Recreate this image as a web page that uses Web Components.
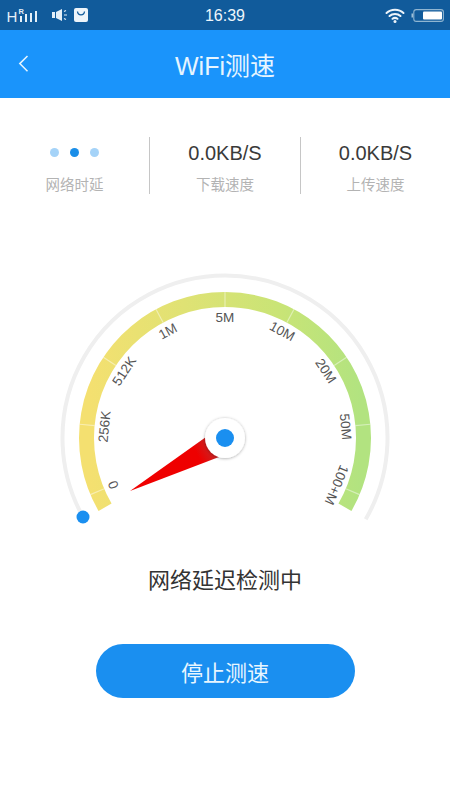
<!DOCTYPE html>
<html lang="zh">
<head>
<meta charset="utf-8">
<title>WiFi测速</title>
<style>
  html, body { margin: 0; padding: 0; background: #fff; }
  body { width: 450px; height: 800px; overflow: hidden; font-family: "Liberation Sans", "Noto Sans CJK SC", sans-serif; }
</style>
</head>
<body>
<speed-app>
  <status-bar time="16:39"></status-bar>
  <nav-bar>WiFi测速</nav-bar>
  <stat-row>
    <stat-cell label="网络时延"><loading-dots></loading-dots></stat-cell>
    <stat-cell label="下载速度">0.0KB/S</stat-cell>
    <stat-cell label="上传速度">0.0KB/S</stat-cell>
  </stat-row>
  <speed-gauge></speed-gauge>
  <status-text>网络延迟检测中</status-text>
  <pill-button>停止测速</pill-button>
</speed-app>

<script>
// small helper, every element is the same shape: styles + markup in a shadow root
function shadow(el, html) {
  el.attachShadow({ mode: 'open' }).innerHTML = html;
}

class SpeedApp extends HTMLElement {
  constructor() {
    super();
    shadow(this, `<style>:host { display: flex; flex-direction: column; width: 450px; height: 800px; background: #fff; }</style><slot></slot>`);
  }
}

class StatusBar extends HTMLElement {
  connectedCallback() {
    shadow(this, `
      <style>
        :host { display: grid; grid-template-columns: 1fr auto 1fr; align-items: center; height: 30px; background: #115b9b; color: #eef6fb; }
        .left { display: flex; align-items: center; gap: 14px; padding-left: 6px; }
        .right { display: flex; align-items: center; justify-content: flex-end; gap: 6px; padding-right: 6px; }
        .time { font-size: 16px; line-height: 30px; position: relative; top: 1px; }
        svg { display: block; }
      </style>
      <div class="left">
        <svg width="32" height="18" viewBox="0 0 32 18">
          <text x="0.5" y="16" font-size="15" fill="#e4eff8" font-family="Liberation Sans">H</text>
          <text x="12.5" y="8" font-size="7.5" font-weight="bold" fill="#e4eff8" font-family="Liberation Sans">R</text>
          <g fill="#e4eff8"><rect x="14" y="10" width="2" height="6"/><rect x="19" y="8" width="2" height="8"/><rect x="24" y="7" width="2" height="9"/><rect x="29" y="5" width="2" height="11"/></g>
        </svg>
        <svg width="16" height="12" viewBox="0 0 16 12">
          <rect x="0" y="3" width="3" height="6" fill="#e4eff8"/>
          <path d="M4 3 L10 0 V12 L4 9Z" fill="#e4eff8"/>
          <path d="M12 2.5l2-1M12 6h3M12 9.5l2 1" stroke="#e4eff8" stroke-width="1.2" fill="none"/>
        </svg>
        <svg width="14" height="14" viewBox="0 0 14 14" style="margin-left:-8px">
          <rect width="14" height="14" rx="2" fill="#edf4fa"/>
          <path d="M3.5 3.5 C4 8 10 8 10.5 3.5" stroke="#115b9b" stroke-width="1.3" fill="none"/>
        </svg>
      </div>
      <div class="time">${this.getAttribute('time')}</div>
      <div class="right">
        <svg width="20" height="15" viewBox="0 0 20 15">
          <g fill="none" stroke="#edf4fa" stroke-width="2" stroke-linecap="round">
            <path d="M1.5 5 C6 0.7 14 0.7 18.5 5"/>
            <path d="M4.5 8 C7.5 5.2 12.5 5.2 15.5 8"/>
            <path d="M7.5 10.8 C9 9.7 11 9.7 12.5 10.8"/>
          </g>
          <circle cx="10" cy="13.4" r="1.5" fill="#edf4fa"/>
        </svg>
        <svg width="33" height="13" viewBox="0 0 33 13">
          <path d="M0.5 4.5 H2 V8.5 H0.5Z" fill="#9dbfd8"/>
          <rect x="2.8" y="0.6" width="29.6" height="11.8" rx="2.5" fill="none" stroke="#8fb5d1" stroke-width="1.1"/>
          <rect x="12" y="2.4" width="19" height="8.2" rx="1" fill="#fff"/>
        </svg>
      </div>`);
  }
}

class NavBar extends HTMLElement {
  constructor() {
    super();
    shadow(this, `
      <style>
        :host { display: flex; align-items: center; justify-content: center; position: relative; height: 68px; background: #1a94fb; color: #e6f5ff; }
        .back { position: absolute; left: 18px; top: 24px; }
        .title { font-size: 25px; font-weight: 400; line-height: 68px; margin-top: 3px; }
      </style>
      <svg class="back" width="12" height="20" viewBox="0 0 12 20"><path d="M9.5 2 L1.8 9.6 L9.5 17.2" fill="none" stroke="#e6f5ff" stroke-width="1.5"/></svg>
      <div class="title"><slot></slot></div>`);
  }
}

class StatRow extends HTMLElement {
  constructor() {
    super();
    shadow(this, `<style>:host { display: grid; grid-template-columns: 150px 151px 149px; margin-top: 39px; height: 57px; }</style><slot></slot>`);
  }
}

class StatCell extends HTMLElement {
  connectedCallback() {
    shadow(this, `
      <style>
        :host { display: flex; flex-direction: column; align-items: center; justify-content: space-between; height: 57px; border-right: 1px solid #c6c6c6; box-sizing: border-box; }
        :host(:last-child) { border-right: 0; }
        .value { height: 32px; display: flex; align-items: center; font-size: 20px; color: #3a3a3a; }
        .label { font-size: 14.5px; line-height: 18px; color: #b3b3b3; }
      </style>
      <div class="value"><slot></slot></div>
      <div class="label">${this.getAttribute('label')}</div>`);
  }
}

class LoadingDots extends HTMLElement {
  constructor() {
    super();
    shadow(this, `
      <style>
        :host { display: flex; gap: 11px; margin-top: -1px; }
        i { width: 9px; height: 9px; border-radius: 50%; background: #a5d3f8; }
        i.on { background: #1a8ee8; }
      </style>
      <i></i><i class="on"></i><i></i>`);
  }
}

class SpeedGauge extends HTMLElement {
  connectedCallback() {
    const cx = 225, cy = 163;
    const pt = (r, deg) => {
      // deg measured clockwise from straight up
      const a = deg * Math.PI / 180;
      return [(cx + r * Math.sin(a)).toFixed(2), (cy - r * Math.cos(a)).toFixed(2)];
    };
    const arc = (r, from, to) => {
      const [x1, y1] = pt(r, from), [x2, y2] = pt(r, to);
      return `M${x1} ${y1} A${r} ${r} 0 1 1 ${x2} ${y2}`;
    };
    const labels = ['0', '256K', '512K', '1M', '5M', '10M', '20M', '50M', '100+M'];
    const step = 28.2;
    let ticks = '', texts = '';
    labels.forEach((t, i) => {
      const deg = (i - 4) * step;
      const [x1, y1] = pt(131, deg), [x2, y2] = pt(146, deg);
      ticks += `<line x1="${x1}" y1="${y1}" x2="${x2}" y2="${y2}" stroke="#fff" stroke-opacity=".45" stroke-width="1.2"/>`;
      const [tx, ty] = pt(121, deg);
      texts += `<text x="${tx}" y="${ty}" transform="rotate(${deg} ${tx} ${ty})" text-anchor="middle" dominant-baseline="central">${t}</text>`;
    });
    shadow(this, `
      <style>
        :host { display: block; height: 290px; margin-top: 81px; }
        svg { display: block; overflow: visible; }
        text { font-family: "Liberation Sans", sans-serif; font-size: 13.5px; fill: #555; }
      </style>
      <svg width="450" height="290" viewBox="0 0 450 290">
        <defs>
          <linearGradient id="band" gradientUnits="userSpaceOnUse" x1="90" y1="0" x2="360" y2="0">
            <stop offset="0" stop-color="#f4e070"/>
            <stop offset=".35" stop-color="#dfe274"/>
            <stop offset=".7" stop-color="#c9e476"/>
            <stop offset="1" stop-color="#b2e380"/>
          </linearGradient>
          <linearGradient id="needle" gradientUnits="userSpaceOnUse" x1="130" y1="216" x2="215" y2="172">
            <stop offset="0" stop-color="#f00000"/>
            <stop offset=".8" stop-color="#ee0000"/>
            <stop offset="1" stop-color="#c22a2a"/>
          </linearGradient>
          <filter id="hubShadow" x="-30%" y="-30%" width="160%" height="160%">
            <feDropShadow dx="0" dy="0.5" stdDeviation="1.6" flood-color="#000" flood-opacity=".35"/>
          </filter>
        </defs>
        <path d="${arc(162.5, -120, 120)}" fill="none" stroke="#efefef" stroke-width="4"/>
        <path d="${arc(138.5, -120, 120)}" fill="none" stroke="url(#band)" stroke-width="15"/>
        ${ticks}
        ${texts}
        <circle cx="83" cy="242" r="6.5" fill="#1a8ff0"/>
        <path d="M130 216 L206 162 L219 182Z" fill="url(#needle)"/>
        <circle cx="${cx}" cy="${cy}" r="20" fill="#fff" filter="url(#hubShadow)"/>
        <circle cx="${cx}" cy="${cy}" r="9" fill="#1a8ff0"/>
      </svg>`);
  }
}

class StatusText extends HTMLElement {
  constructor() {
    super();
    shadow(this, `<style>:host { display: block; margin-top: 0; text-align: center; font-size: 22px; line-height: 32px; color: #333; }</style><slot></slot>`);
  }
}

class PillButton extends HTMLElement {
  constructor() {
    super();
    shadow(this, `
      <style>
        :host { display: flex; align-items: center; justify-content: center; align-self: center; width: 259px; height: 54px; margin-top: 47px; border-radius: 27px; background: #1a8ff0; color: #e8f6ff; font-size: 22px; }
      </style>
      <slot></slot>`);
  }
}

customElements.define('speed-app', SpeedApp);
customElements.define('status-bar', StatusBar);
customElements.define('nav-bar', NavBar);
customElements.define('stat-row', StatRow);
customElements.define('stat-cell', StatCell);
customElements.define('loading-dots', LoadingDots);
customElements.define('speed-gauge', SpeedGauge);
customElements.define('status-text', StatusText);
customElements.define('pill-button', PillButton);
</script>
</body>
</html>
